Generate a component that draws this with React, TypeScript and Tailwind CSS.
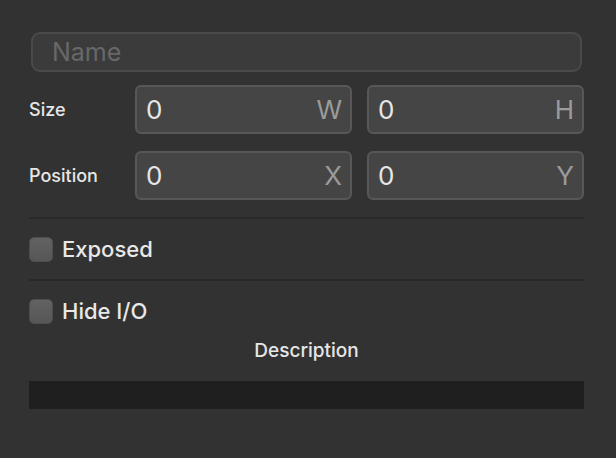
import React from "react";

function NumberField({ value, unit }: { value: string; unit: string }) {
  return (
    <div className="flex-1 h-[49px] flex items-center justify-between pl-[9px] pr-[8px] bg-[#454545] border-2 border-[#575757] rounded-[6px]">
      <span className="text-[26px] leading-none text-[#e6e6e6]">{value}</span>
      <span className="text-[26px] leading-none text-[#9b9b9b]">{unit}</span>
    </div>
  );
}

function Checkbox({ label }: { label: string }) {
  return (
    <label className="flex items-center gap-[9px]">
      <span className="w-[24px] h-[25px] rounded-[5px] bg-gradient-to-b from-[#626262] to-[#565656] border border-[#4e4e4e]" />
      <span className="text-[22px] leading-none font-medium text-[#e8e8e8]">{label}</span>
    </label>
  );
}

export default function App() {
  return (
    <div
      className="w-[616px] h-[458px] bg-[#323232] pl-[29px] pr-[32px] pt-[32px]"
      style={{ fontFamily: "Inter, 'Noto Sans', sans-serif" }}
    >
      {/* name */}
      <div className="mx-[2px] h-[40px] flex items-center px-[19px] bg-[#3b3b3b] border-2 border-[#4a4a4a] rounded-[9px]">
        <span className="text-[25px] leading-none text-[#686868]">Name</span>
      </div>

      {/* size + position */}
      <div className="mt-[13px] flex flex-col gap-[17px]">
        <div className="flex items-center">
          <span className="w-[106px] text-[18px] font-medium text-[#e6e6e6]">Size</span>
          <div className="flex-1 flex gap-[15px]">
            <NumberField value="0" unit="W" />
            <NumberField value="0" unit="H" />
          </div>
        </div>
        <div className="flex items-center">
          <span className="w-[106px] text-[18px] font-medium text-[#e6e6e6]">Position</span>
          <div className="flex-1 flex gap-[15px]">
            <NumberField value="0" unit="X" />
            <NumberField value="0" unit="Y" />
          </div>
        </div>
      </div>

      <div className="mt-[17px] h-[2px] bg-[#292929]" />

      <div className="h-[60px] flex items-center">
        <Checkbox label="Exposed" />
      </div>

      <div className="h-[2px] bg-[#292929]" />

      <div className="h-[60px] flex items-center">
        <Checkbox label="Hide I/O" />
      </div>

      <div className="text-center text-[19px] leading-none font-medium text-[#e6e6e6]">
        Description
      </div>

      <div className="mt-[21px] h-[28px] bg-[#1f1f1f]" />
    </div>
  );
}
